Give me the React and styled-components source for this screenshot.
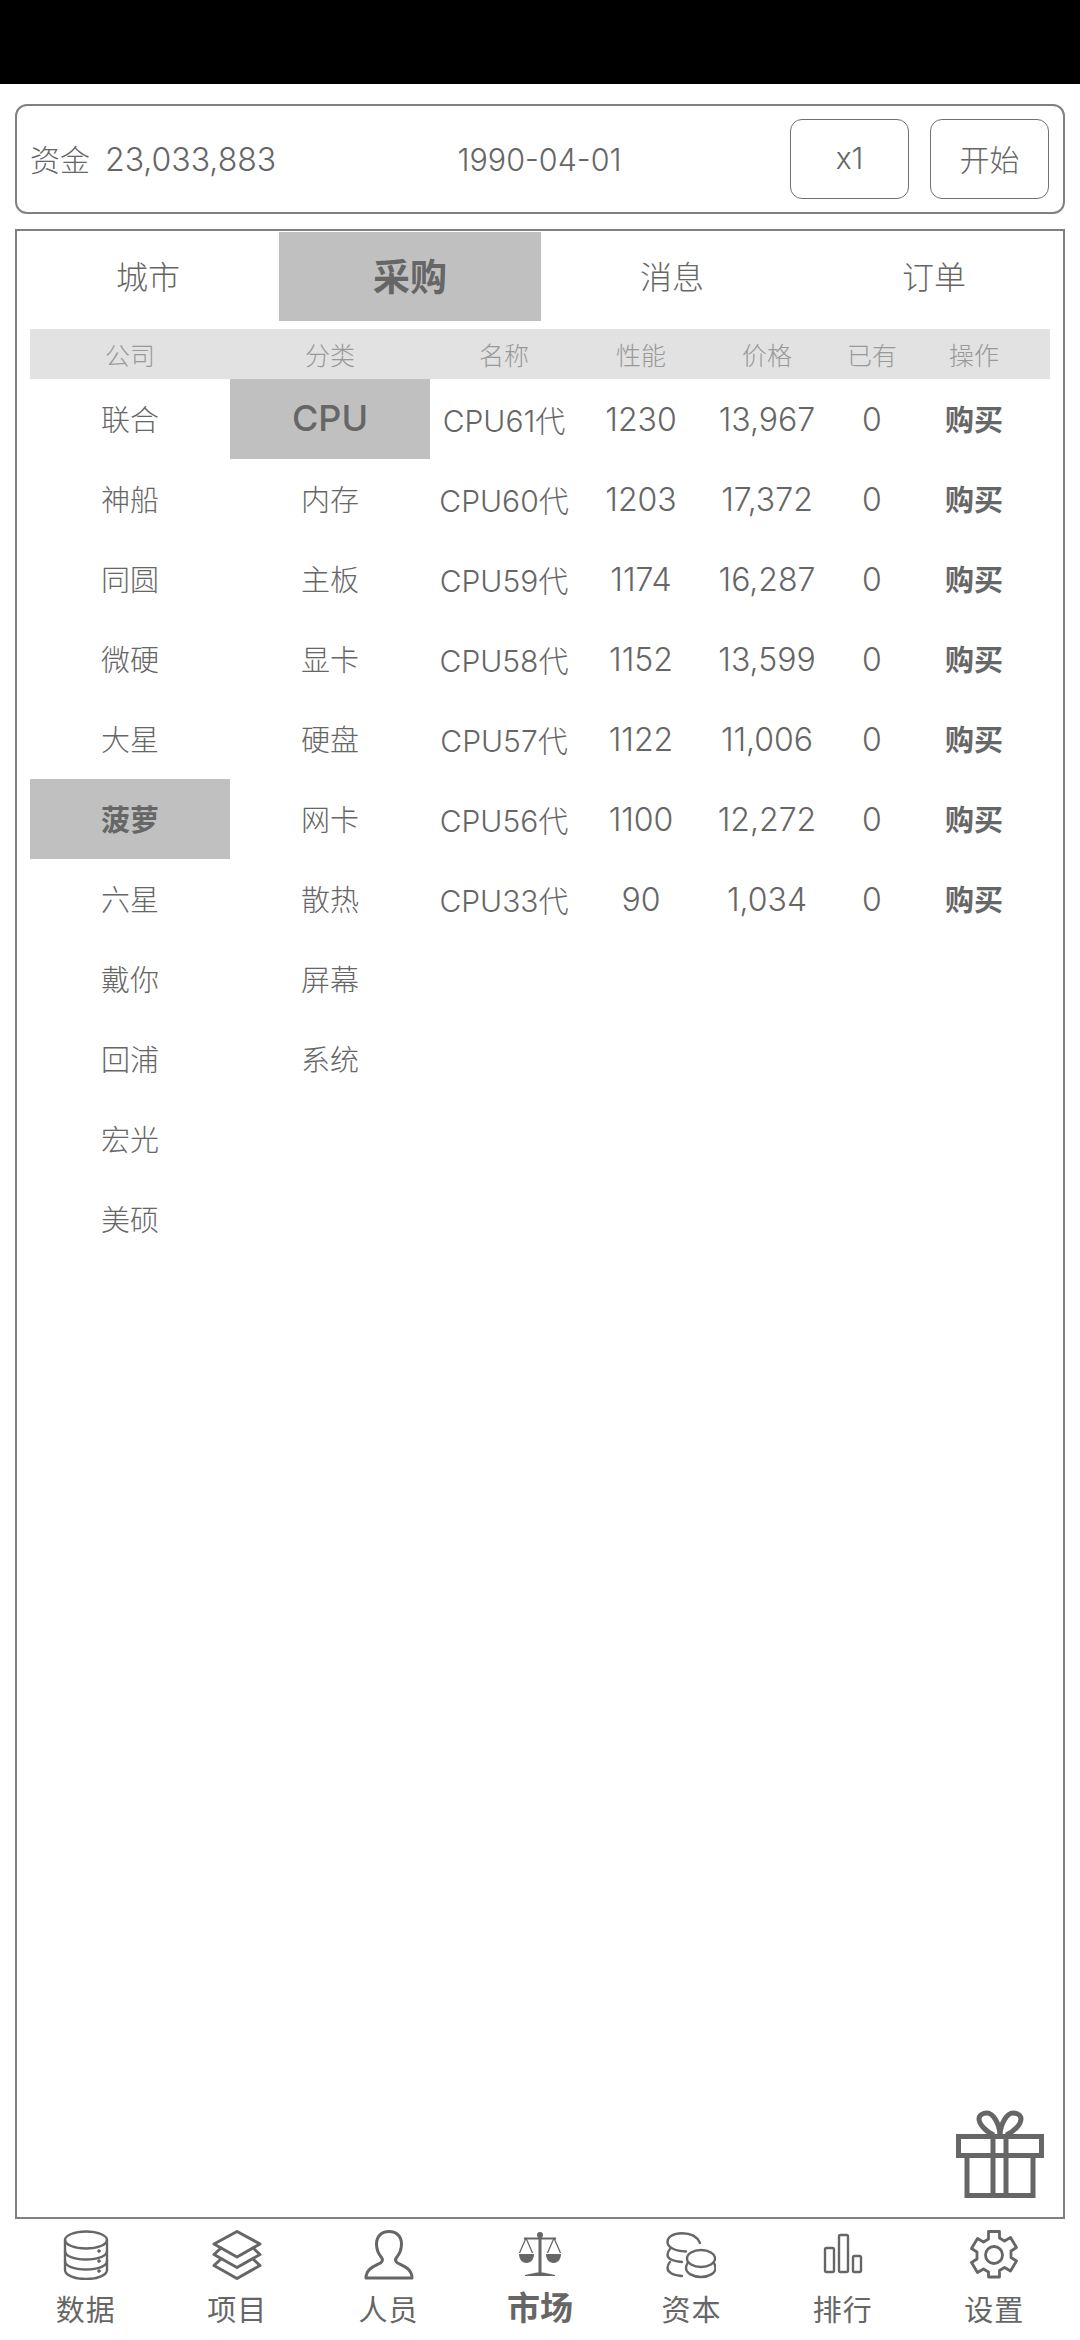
import React from "react";
import styled, { createGlobalStyle } from "styled-components";

const FONT = `Inter, "Noto Sans CJK SC", sans-serif`;
const INK = "#666666";

const GlobalStyle = createGlobalStyle`
  html, body {
    margin: 0;
    padding: 0;
    background: #fff;
    font-family: ${FONT};
    font-weight: 300;
    color: ${INK};
  }
  * { box-sizing: border-box; }
`;

const Page = styled.div`
  width: 1080px;
  height: 2340px;
  display: flex;
  flex-direction: column;
  overflow: hidden;
`;
const StatusBar = styled.div`
  height: 84px;
  background: #000;
  flex: none;
`;
const TopBox = styled.div`
  flex: none;
  height: 110px;
  margin: 20px 15px 0;
  border: 2px solid #808080;
  border-radius: 12px;
  display: grid;
  grid-template-columns: 1fr auto 1fr;
  align-items: center;
  padding: 0 14px 0 13px;
`;
const Money = styled.div`
  display: flex;
  align-items: center;
  gap: 15px;
`;
const MoneyLabel = styled.span`
  font-size: 30px;
  padding-bottom: 3px;
`;
const MoneyValue = styled.span`
  font-size: 32px;
`;
const DateText = styled.div`
  font-size: 30.500px;
`;
const Buttons = styled.div`
  display: flex;
  justify-content: flex-end;
  gap: 21px;
`;
const SmallButton = styled.div`
  width: 119px;
  height: 80px;
  border: 1.5px solid #707070;
  border-radius: 12px;
  font-size: 30px;
  padding-bottom: 2px;
  display: flex;
  align-items: center;
  justify-content: center;
`;
const Panel = styled.div`
  position: relative;
  flex: 1;
  margin: 15px 15px 0;
  border: 2px solid #808080;
  padding: 1px 13px 0;
`;
const Tabs = styled.div`
  display: grid;
  grid-template-columns: repeat(4, 262px);
  margin: 0 -13px;
  height: 89px;
`;
const Tab = styled.div`
  display: flex;
  align-items: center;
  justify-content: center;
  padding-bottom: 3px;
  font-size: ${(p) => (p.$on ? "37px" : "32px")};
  font-weight: ${(p) => (p.$on ? 700 : 300)};
  background: ${(p) => (p.$on ? "#c0c0c0" : "transparent")};
`;
const COLS = "200px 200px 148px 126px 126px 84px 120px";
const HeadRow = styled.div`
  margin-top: 8px;
  height: 50px;
  background: #e2e2e2;
  display: grid;
  grid-template-columns: ${COLS};
  align-items: center;
  text-align: center;
  font-size: 25px;
  color: #999;
`;
const Body = styled.div`
  display: grid;
  grid-template-columns: 200px 200px 1fr;
`;
const Column = styled.div`
  display: flex;
  flex-direction: column;
`;
const PickItem = styled.div`
  height: 80px;
  display: flex;
  align-items: center;
  justify-content: center;
  padding-bottom: 2px;
  font-size: ${(p) => (p.$big && p.$on ? "36px" : "29px")};
  font-weight: ${(p) => (p.$on ? (p.$big ? 500 : 700) : 300)};
  background: ${(p) => (p.$on ? "#c0c0c0" : "transparent")};
`;
const ProductRow = styled.div`
  height: 80px;
  display: grid;
  grid-template-columns: 148px 126px 126px 84px 120px;
  align-items: center;
  text-align: center;
  font-size: 32px;
  white-space: nowrap;
`;
const ProductName = styled.div`
  font-size: 30px;
  padding-bottom: 1px;
`;
const BuyLink = styled.div`
  font-weight: 700;
  font-size: 29px;
  padding-bottom: 2px;
`;
const GiftButton = styled.div`
  position: absolute;
  right: 19px;
  bottom: 19px;
  width: 88px;
  height: 88px;
`;
const Nav = styled.div`
  flex: none;
  height: 121px;
  padding: 11px 10px 0;
  display: grid;
  grid-template-columns: repeat(7, 1fr);
`;
const NavItem = styled.div`
  display: flex;
  flex-direction: column;
  align-items: center;
`;
const NavIcon = styled.svg`
  width: 50px;
  height: 50px;
  display: block;
`;
const NavLabel = styled.div`
  margin-top: ${(p) => (p.$on ? "9px" : "12px")};
  height: 38px;
  line-height: 38px;
  font-size: ${(p) => (p.$on ? "33px" : "29px")};
  font-weight: ${(p) => (p.$on ? 700 : 400)};
  letter-spacing: ${(p) => (p.$on ? "0" : "1px")};
`;

const stroke = { fill: "none", stroke: INK, strokeWidth: 2.4, strokeLinejoin: "round", strokeLinecap: "round" };

const icons = {
  data: (
    <g {...stroke}>
      <ellipse cx="25" cy="10" rx="21" ry="8.500" />
      <path d="M4 10v30c0 5 9 9 21 9s21-4 21-9V10" />
      <path d="M4 21c0 5 9 8.500 21 8.500S46 26 46 21" />
      <path d="M4 31c0 5 9 8.500 21 8.500S46 36 46 31" />
      <circle cx="38" cy="21" r="1.500" fill={INK} strokeWidth="0.6" />
      <circle cx="38" cy="31" r="1.500" fill={INK} strokeWidth="0.6" />
      <circle cx="38" cy="41" r="1.500" fill={INK} strokeWidth="0.6" />
    </g>
  ),
  layers: (
    <g {...stroke} strokeWidth="3">
      <path d="M25 1.500 48 14 25 27 2 14Z" />
      <path d="M9 18 2 24.500 25 37.500 48 24.500 41 18" />
      <path d="M9 29 2 35.500 25 48.500 48 35.500 41 29" />
    </g>
  ),
  person: (
    <g {...stroke} strokeWidth="3">
      <path d="M25 1.500c-8 0-12.500 5.500-12.500 12.500 0 6 2 10 5 13.500 1.500 2 1 4-1 5.500C11 36 2 38.500 2 48h46c0-9.500-9-12-14.500-15-2-1.500-2.500-3.500-1-5.500 3-3.500 5-7.500 5-13.500C37.500 7 33 1.500 25 1.500Z" />
    </g>
  ),
  scale: (
    <g>
      <circle cx="25" cy="5" r="3" fill={INK} />
      <path d="M23.500 5h3v38h-3z" fill={INK} />
      <path d="M10 45l12-2.500h6L40 45v1H10z" fill={INK} />
      <path d="M9 8.500h32" stroke={INK} strokeWidth="2" />
      <path d="M11 8 4.500 23M11 8l6.500 15M39 8l-6.500 15M39 8l6.500 15" stroke={INK} strokeWidth="1.300" fill="none" />
      <path d="M4 24h15c0 5-3 9-7.500 9S4 29 4 24Z" fill={INK} />
      <path d="M31 24h15c0 5-3 9-7.500 9S31 29 31 24Z" fill={INK} />
    </g>
  ),
  coins: (
    <g {...stroke}>
      <path d="M34 13C31 6 24 3.300 16 3.300 7 3.300 1.500 7 1.500 12c0 5 7 9 18.500 9.500" />
      <path d="M4 19c-2 2-2.500 4-2.500 6 0 3 4 6 14.500 7" />
      <path d="M4 32c-2 2-2.500 4-2.500 6 0 4 4.500 7 14.500 8" />
      <ellipse cx="35" cy="28.500" rx="14" ry="8.500" />
      <path d="M21.500 33c-1 2-1.500 3-1.500 5 0 5 7 9 15 9s14.500-4 14.500-9c0-2-.5-3-1.500-5" />
    </g>
  ),
  bars: (
    <g {...stroke}>
      <rect x="7" y="18" width="9" height="24" rx="1.500" />
      <rect x="21" y="5" width="9" height="37" rx="1.500" />
      <rect x="35" y="26" width="8" height="16" rx="1.500" />
    </g>
  ),
  gear: (
    <g {...stroke} strokeWidth="2.800">
      <circle cx="25" cy="25" r="8.500" />
      <path d="M19.500 1.500h11v6.500l5 3 6-3.500 6 10-5.500 3.500v6.500l5.500 3.500-6 10-6-3.500-5 3v6.500h-11V42l-5-3-6 3.500-6-10L8 29v-7l-5.500-3.500 6-10 6 3.500 5-3z" />
    </g>
  ),
};

const companies = ["联合", "神船", "同圆", "微硬", "大星", "菠萝", "六星", "戴你", "回浦", "宏光", "美硕"];
const categories = ["CPU", "内存", "主板", "显卡", "硬盘", "网卡", "散热", "屏幕", "系统"];
const products = [
  ["CPU61代", "1230", "13,967"],
  ["CPU60代", "1203", "17,372"],
  ["CPU59代", "1174", "16,287"],
  ["CPU58代", "1152", "13,599"],
  ["CPU57代", "1122", "11,006"],
  ["CPU56代", "1100", "12,272"],
  ["CPU33代", "90", "1,034"],
];
const navItems = [
  ["data", "数据"],
  ["layers", "项目"],
  ["person", "人员"],
  ["scale", "市场"],
  ["coins", "资本"],
  ["bars", "排行"],
  ["gear", "设置"],
];

function GiftIcon() {
  return (
    <svg width="88" height="88" viewBox="0 0 88 88" fill="none" stroke={INK} strokeWidth="5">
      <path d="M2.500 26.500h83v19h-83z" />
      <path d="M11 45.500v40h66v-40" />
      <path d="M37 26.500v59M50 26.500v59" />
      <path d="M38 25C30 22 23 14 23 9c0-4 4-6 8-6 6 0 12 10 13 21" />
      <path d="M50 25c8-3 15-11 15-16 0-4-4-6-8-6-6 0-12 10-13 21" />
    </svg>
  );
}

export default function App() {
  return (
    <Page>
      <GlobalStyle />
      <StatusBar />
      <TopBox>
        <Money>
          <MoneyLabel>资金</MoneyLabel>
          <MoneyValue>23,033,883</MoneyValue>
        </Money>
        <DateText>1990-04-01</DateText>
        <Buttons>
          <SmallButton>x1</SmallButton>
          <SmallButton>开始</SmallButton>
        </Buttons>
      </TopBox>
      <Panel>
        <Tabs>
          <Tab>城市</Tab>
          <Tab $on>采购</Tab>
          <Tab>消息</Tab>
          <Tab>订单</Tab>
        </Tabs>
        <HeadRow>
          <div>公司</div>
          <div>分类</div>
          <div>名称</div>
          <div>性能</div>
          <div>价格</div>
          <div>已有</div>
          <div>操作</div>
        </HeadRow>
        <Body>
          <Column>
            {companies.map((c) => (
              <PickItem key={c} $on={c === "菠萝"}>
                {c}
              </PickItem>
            ))}
          </Column>
          <Column>
            {categories.map((c) => (
              <PickItem key={c} $big $on={c === "CPU"}>
                {c}
              </PickItem>
            ))}
          </Column>
          <Column>
            {products.map(([name, perf, price]) => (
              <ProductRow key={name}>
                <ProductName>{name}</ProductName>
                <div>{perf}</div>
                <div>{price}</div>
                <div>0</div>
                <BuyLink>购买</BuyLink>
              </ProductRow>
            ))}
          </Column>
        </Body>
        <GiftButton>
          <GiftIcon />
        </GiftButton>
      </Panel>
      <Nav>
        {navItems.map(([icon, label]) => (
          <NavItem key={icon}>
            <NavIcon viewBox="0 0 50 50">{icons[icon]}</NavIcon>
            <NavLabel $on={icon === "scale"}>{label}</NavLabel>
          </NavItem>
        ))}
      </Nav>
    </Page>
  );
}
